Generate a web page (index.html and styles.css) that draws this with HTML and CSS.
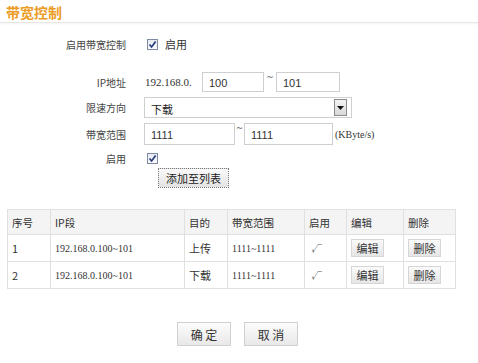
FILE: index.html
```html
<!DOCTYPE html>
<html lang="zh-CN">
<head>
    <meta charset="UTF-8">
    <meta name="viewport" content="width=device-width, initial-scale=1.0">
    <title>带宽控制</title>
    <link rel="stylesheet" href="styles.css">
</head>
<body>
    <div class="title">带宽控制</div>

    <div class="form">
        <div class="row row-enable">
            <span class="lbl">启用带宽控制</span>
            <span class="chk"><svg width="9" height="9" viewBox="0 0 9 9"><path d="M1.5 4.5 L3.6 7 L7.6 1.5" fill="none" stroke="#23367a" stroke-width="1.6"/></svg></span>
            <span class="chk-text">启用</span>
        </div>

        <div class="row row-ip">
            <span class="lbl">IP地址</span>
            <span class="mono">192.168.0.</span>
            <input class="txt ip-from" type="text" value="100">
            <span class="tilde">~</span>
            <input class="txt ip-to" type="text" value="101">
        </div>

        <div class="row row-dir">
            <span class="lbl">限速方向</span>
            <div class="select">
                <span>下载</span>
                <span class="select-btn"><svg width="7" height="4" viewBox="0 0 7 4"><path d="M0 0 H7 L3.5 4 Z" fill="#111"/></svg></span>
            </div>
        </div>

        <div class="row row-bw">
            <span class="lbl">带宽范围</span>
            <input class="txt bw" type="text" value="1111">
            <span class="tilde">~</span>
            <input class="txt bw" type="text" value="1111">
            <span class="mono unit">(KByte/s)</span>
        </div>

        <div class="row row-on">
            <span class="lbl">启用</span>
            <span class="chk"><svg width="9" height="9" viewBox="0 0 9 9"><path d="M1.5 4.5 L3.6 7 L7.6 1.5" fill="none" stroke="#23367a" stroke-width="1.6"/></svg></span>
        </div>

        <div class="row row-add">
            <button class="btn-add">添加至列表</button>
        </div>
    </div>

    <table class="list">
        <tr>
            <th class="c-no">序号</th>
            <th class="c-ip">IP段</th>
            <th class="c-dir">目的</th>
            <th class="c-bw">带宽范围</th>
            <th class="c-on">启用</th>
            <th class="c-edit">编辑</th>
            <th>删除</th>
        </tr>
        <tr>
            <td>1</td>
            <td class="mono">192.168.0.100~101</td>
            <td>上传</td>
            <td class="mono">1111~1111</td>
            <td class="tick">√</td>
            <td><button class="btn-sm">编辑</button></td>
            <td><button class="btn-sm">删除</button></td>
        </tr>
        <tr>
            <td>2</td>
            <td class="mono">192.168.0.100~101</td>
            <td>下载</td>
            <td class="mono">1111~1111</td>
            <td class="tick">√</td>
            <td><button class="btn-sm">编辑</button></td>
            <td><button class="btn-sm">删除</button></td>
        </tr>
    </table>

    <div class="actions">
        <button class="btn">确 定</button>
        <button class="btn">取 消</button>
    </div>
</body>
</html>
```

FILE: styles.css
```css
body {
    margin: 0;
    background: #fff;
    font-family: "Noto Sans CJK SC", sans-serif;
    color: #333;
}
.title {
    height: 22px;
    padding-left: 6px;
    font-size: 14px;
    font-weight: bold;
    line-height: 25px;
    color: #eb9c26;
    border-bottom: 1px solid #e6e6e6;
    box-shadow: 0 1px 2px rgba(0,0,0,0.05);
}
.row {
    display: flex;
    align-items: center;
}
.lbl {
    width: 126px;
    text-align: right;
    font-size: 10px;
    color: #444;
    margin-right: 18px;
}
.row-enable {
    height: 22px;
    margin-top: 10px;
}
.row-ip {
    height: 20px;
    margin-top: 17px;
}
.row-dir {
    height: 21px;
    margin-top: 5px;
}
.row-bw {
    height: 22px;
    margin-top: 5px;
}
.row-on {
    height: 18px;
    margin-top: 4px;
}
.row-add {
    height: 20px;
    margin-top: 1px;
    padding-left: 158px;
}
.chk {
    width: 9px;
    height: 9px;
    margin-left: 3px;
    border: 1px solid #7c8aa3;
    background: linear-gradient(#e6e9ef, #fbfbfc);
    display: flex;
    align-items: center;
    justify-content: center;
}
.chk-text {
    font-size: 11px;
    margin-left: 7px;
}
.mono {
    font-family: "Liberation Serif", serif;
    font-size: 11px;
}
.row-ip .mono {
    margin-left: 1px;
    width: 57px;
}
.txt {
    box-sizing: border-box;
    border: 1px solid #cfcfcf;
    height: 100%;
    padding: 2px 0 0 6px;
    font-family: "Liberation Sans", sans-serif;
    font-size: 11px;
    color: #333;
    outline: none;
}
.ip-from {
    width: 62px;
}
.ip-to {
    width: 64px;
}
.tilde {
    font-family: "Liberation Serif", serif;
    font-size: 11px;
    align-self: flex-start;
    line-height: 8px;
    text-align: center;
    width: 12px;
}
.row-bw .tilde {
    width: 9px;
}
.bw {
    width: 91px;
}
.row-bw .bw:last-of-type {
    width: 89px;
}
.unit {
    margin-left: 2px;
    font-size: 10px;
}
.select {
    box-sizing: border-box;
    width: 208px;
    height: 100%;
    border: 1px solid #cfcfcf;
    display: flex;
    align-items: center;
    justify-content: space-between;
    padding: 3px 4px 0 6px;
    font-size: 11px;
    color: #222;
}
.select-btn {
    box-sizing: border-box;
    width: 13px;
    height: 17px;
    margin-top: -3px;
    border: 1px solid #8a8a8a;
    background: linear-gradient(#f4f4f4, #d8d8d8);
    display: flex;
    align-items: center;
    justify-content: center;
}
.btn-add {
    width: 71px;
    height: 20px;
    padding: 0;
    border: 1px dotted #777;
    background: linear-gradient(#fafafa, #e3e3e3);
    font-family: "Noto Sans CJK SC", sans-serif;
    font-size: 11px;
    color: #222;
}
.list {
    margin: 21px 0 0 7px;
    width: 449px;
    border-collapse: collapse;
    font-size: 11px;
}
.list th,
.list td {
    border: 1px solid #e0e0e0;
    text-align: left;
    padding: 0 0 0 4px;
}
.list th {
    height: 24px;
    font-weight: normal;
    background: #f4f4f4;
    font-size: 10.5px;
}
.list td {
    height: 26px;
}
.list td.mono {
    font-size: 10px;
}
.c-no { width: 38px; }
.c-ip { width: 129px; }
.c-dir { width: 38px; }
.c-bw { width: 72px; }
.c-on { width: 37px; }
.c-edit { width: 52px; }
.tick {
    color: #555;
    font-style: italic;
    font-size: 9px;
    padding-left: 6px !important;
}
.btn-sm {
    width: 33px;
    height: 18px;
    padding: 0;
    border: 1px solid #d6d6d6;
    background: linear-gradient(#fafafa, #e6e6e6);
    font-family: "Noto Sans CJK SC", sans-serif;
    font-size: 11px;
    color: #333;
}
.actions {
    display: flex;
    gap: 13px;
    margin-top: 33px;
    padding-left: 177px;
}
.btn {
    width: 54px;
    height: 24px;
    padding: 0;
    border: 1px solid #d0d0d0;
    background: linear-gradient(#fcfcfc, #e8e8e8);
    font-family: "Noto Sans CJK SC", sans-serif;
    font-size: 12px;
    color: #333;
}
```
